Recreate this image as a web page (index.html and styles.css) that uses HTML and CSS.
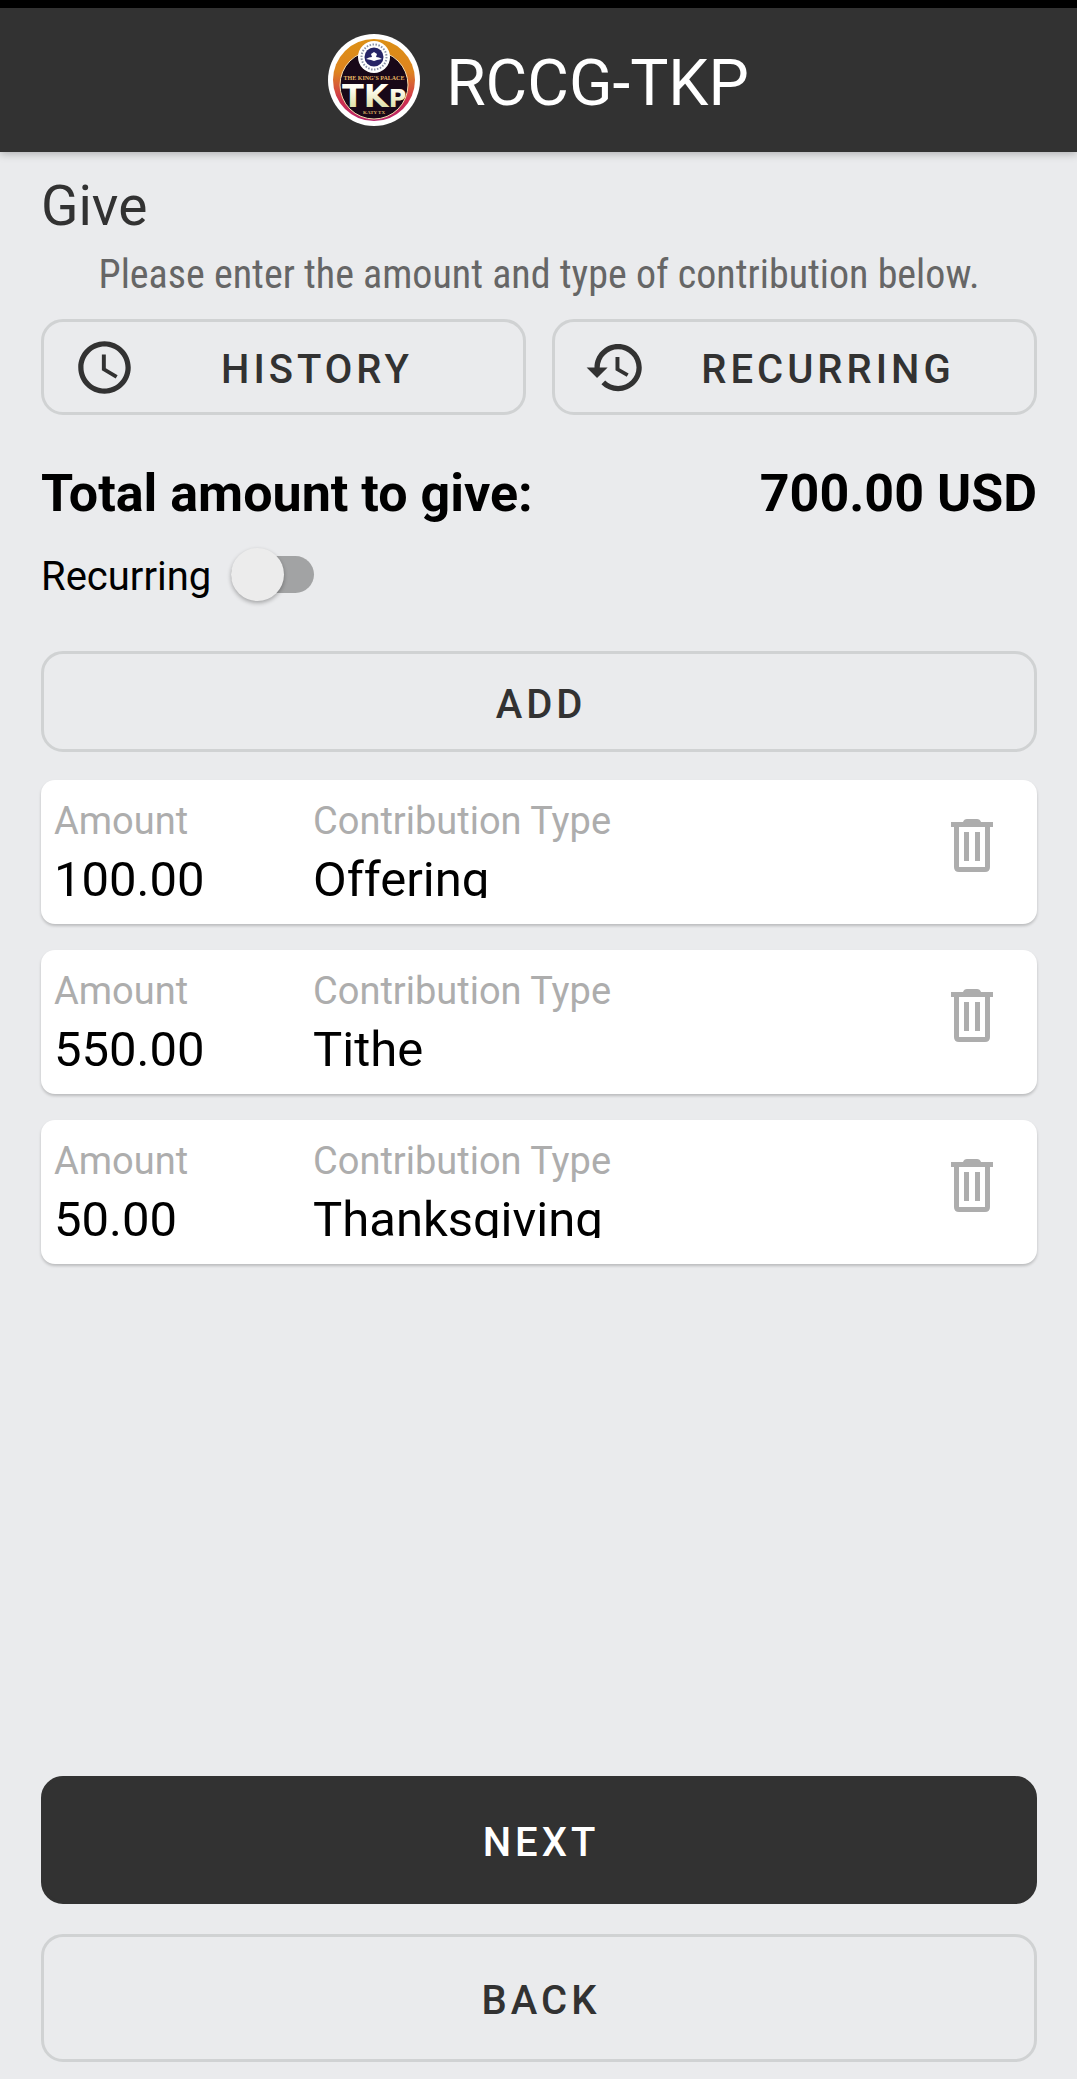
FILE: index.html
```html
<!DOCTYPE html>
<html lang="en">
<head>
<meta charset="utf-8">
<meta name="viewport" content="width=device-width, initial-scale=1">
<title>RCCG-TKP – Give</title>
<link rel="stylesheet" href="styles.css">
</head>
<body>
<header class="app-bar">
  <svg class="app-bar__logo" viewBox="0 0 92 92" role="img" aria-label="The King's Palace">
    <defs>
      <linearGradient id="ring" x1="0" y1="0" x2="0" y2="1">
        <stop offset="0" stop-color="#dc9014"/>
        <stop offset=".4" stop-color="#de8420"/>
        <stop offset=".75" stop-color="#cf3050"/>
        <stop offset="1" stop-color="#b5246a"/>
      </linearGradient>
      <linearGradient id="gold" x1="0" y1="0" x2="0" y2="1">
        <stop offset=".3" stop-color="#fffef4"/>
        <stop offset="1" stop-color="#d3d38a"/>
      </linearGradient>
    </defs>
    <circle cx="46" cy="46" r="46" fill="#fff"/>
    <circle cx="46" cy="46" r="41" fill="url(#ring)"/>
    <circle cx="46" cy="51" r="34" fill="#180818" stroke="#f3dcae" stroke-width="1"/>
    <circle cx="46" cy="23" r="16" fill="#fff"/>
    <circle cx="46" cy="23" r="12.500" fill="none" stroke="#8a93a8" stroke-width="2" stroke-dasharray="1.500 1.500"/>
    <circle cx="46" cy="23" r="9.500" fill="#262466"/>
    <path d="M38 25q3-2 6-2l-1-3 3-2 3 2-1 3q3 0 6 2l-5 1-3 1-3-1z" fill="#fff"/>
    <text x="46" y="46" text-anchor="middle" class="logo-arc">THE KING'S PALACE</text>
    <text x="14" y="73" fill="url(#gold)" class="logo-big">TK<tspan class="logo-small">P</tspan></text>
    <text x="46" y="80" text-anchor="middle" class="logo-city">KATY TX</text>
  </svg>
  <span class="app-bar__title">RCCG-TKP</span>
</header>

<main class="page">
  <h1 class="page__title">Give</h1>
  <p class="page__hint">Please enter the amount and type of contribution below.</p>

  <nav class="shortcuts" aria-label="Giving records">
    <button class="btn btn--icon" type="button">
      <svg class="btn__icon" viewBox="0 0 24 24" aria-hidden="true"><path d="M11.990 2C6.470 2 2 6.480 2 12s4.470 10 9.990 10C17.520 22 22 17.520 22 12S17.520 2 11.990 2zM12 20c-4.420 0-8-3.580-8-8s3.580-8 8-8 8 3.580 8 8-3.580 8-8 8zm.5-13H11v6l5.250 3.150.75-1.230-4.500-2.670z"/></svg>
      <span class="btn__label">HISTORY</span>
    </button>
    <button class="btn btn--icon" type="button">
      <svg class="btn__icon" viewBox="0 0 24 24" aria-hidden="true"><path d="M13 3c-4.970 0-9 4.030-9 9H1l3.890 3.890.07.14L9 12H6c0-3.870 3.130-7 7-7s7 3.130 7 7-3.130 7-7 7c-1.930 0-3.680-.79-4.940-2.060l-1.420 1.420C8.270 19.990 10.510 21 13 21c4.970 0 9-4.030 9-9s-4.030-9-9-9zm-1 5v5l4.280 2.540.72-1.210-3.500-2.080V8H12z"/></svg>
      <span class="btn__label">RECURRING</span>
    </button>
  </nav>

  <div class="total">
    <span>Total amount to give:</span>
    <output>700.00 USD</output>
  </div>

  <label class="toggle">
    <span class="toggle__label">Recurring</span>
    <input class="toggle__input" type="checkbox" role="switch">
  </label>

  <button class="btn btn--add" type="button">ADD</button>

  <ul class="gifts">
    <li class="gift">
      <label class="field field--amount"><span class="field__label">Amount</span><span class="field__box"><input class="field__input" type="text" inputmode="decimal" value="100.00"></span></label>
      <label class="field field--type"><span class="field__label">Contribution Type</span><span class="field__box"><select class="field__input"><option selected>Offering</option><option>Tithe</option><option>Thanksgiving</option></select></span></label>
      <button class="gift__delete" type="button" aria-label="Delete offering"><svg viewBox="0 0 42 53" aria-hidden="true"><path fill-rule="evenodd" d="M16 0h10q3 0 4 3h12v5h-3v40q0 5-5 5H8q-5 0-5-5V8H0V3h12q1-3 4-3zM8 8v40h26V8zM13 13h5v29h-5zM24 13h5v29h-5z"/></svg></button>
    </li>
    <li class="gift">
      <label class="field field--amount"><span class="field__label">Amount</span><span class="field__box"><input class="field__input" type="text" inputmode="decimal" value="550.00"></span></label>
      <label class="field field--type"><span class="field__label">Contribution Type</span><span class="field__box"><select class="field__input"><option>Offering</option><option selected>Tithe</option><option>Thanksgiving</option></select></span></label>
      <button class="gift__delete" type="button" aria-label="Delete tithe"><svg viewBox="0 0 42 53" aria-hidden="true"><path fill-rule="evenodd" d="M16 0h10q3 0 4 3h12v5h-3v40q0 5-5 5H8q-5 0-5-5V8H0V3h12q1-3 4-3zM8 8v40h26V8zM13 13h5v29h-5zM24 13h5v29h-5z"/></svg></button>
    </li>
    <li class="gift">
      <label class="field field--amount"><span class="field__label">Amount</span><span class="field__box"><input class="field__input" type="text" inputmode="decimal" value="50.00"></span></label>
      <label class="field field--type"><span class="field__label">Contribution Type</span><span class="field__box"><select class="field__input"><option>Offering</option><option>Tithe</option><option selected>Thanksgiving</option></select></span></label>
      <button class="gift__delete" type="button" aria-label="Delete thanksgiving"><svg viewBox="0 0 42 53" aria-hidden="true"><path fill-rule="evenodd" d="M16 0h10q3 0 4 3h12v5h-3v40q0 5-5 5H8q-5 0-5-5V8H0V3h12q1-3 4-3zM8 8v40h26V8zM13 13h5v29h-5zM24 13h5v29h-5z"/></svg></button>
    </li>
  </ul>

  <div class="actions">
    <button class="btn btn--large btn--primary" type="button">NEXT</button>
    <button class="btn btn--large" type="button">BACK</button>
  </div>
</main>
</body>
</html>
```

FILE: styles.css
```css
:root {
  --bg: #eaebed;
  --ink: #323232;
  --line: #d0d2d3;
  --muted: #adadad;
}

* { box-sizing: border-box; }

body {
  margin: 0;
  min-height: 100vh;
  display: flex;
  flex-direction: column;
  background: var(--bg);
  color: #000;
  font-family: Roboto, "Liberation Sans", sans-serif;
  font-size: 40px;
  line-height: 48px;
}

button, input, select { font: inherit; color: inherit; }

/* App bar */
.app-bar {
  display: flex;
  align-items: center;
  justify-content: center;
  gap: 26px;
  padding: 26px 16px;
  border-top: 8px solid #000;
  background: var(--ink);
  color: #fff;
  box-shadow: 0 2px 8px rgba(0, 0, 0, .25);
}
.app-bar__logo { width: 92px; height: 92px; }
.app-bar__title { padding-top: 8px; font-size: 64px; line-height: 76px; }
.logo-arc { font: bold 6px "Liberation Serif", serif; fill: #e9b663; }
.logo-big { font: bold 32px "DejaVu Sans", sans-serif; }
.logo-small { font-size: 24px; }
.logo-city { font: bold 5px "Liberation Serif", serif; fill: #d9ac62; }

/* Page */
.page {
  flex: 1;
  display: flex;
  flex-direction: column;
  padding: 22px 40px 17px 41px;
}
.page__title {
  margin: 0;
  color: var(--ink);
  font-size: 55px;
  font-weight: 400;
  line-height: 64px;
}
.page__hint {
  margin: 13px 0 20px;
  color: #666;
  font-family: "Roboto Condensed", Roboto, sans-serif;
  text-align: center;
}

/* Buttons */
.btn {
  padding: 6px 32px 0;
  border: 3px solid var(--line);
  border-radius: 22px;
  background: transparent;
  color: var(--ink);
  font-weight: 500;
  letter-spacing: 4px;
  text-indent: 4px;
}
.btn--icon {
  flex: 1 1 0;
  display: flex;
  align-items: center;
  height: 96px;
  padding: 0 29px;
}
.btn__icon { width: 63px; height: 63px; fill: currentColor; }
.btn__label { flex: 1; padding-top: 6px; text-align: center; }
.btn--add { height: 101px; }
.btn--large { height: 128px; }
.btn--primary { border-color: var(--ink); background: var(--ink); color: #fff; }
.shortcuts { display: flex; gap: 26px; }

.total {
  display: flex;
  justify-content: space-between;
  margin-top: 49px;
  font-size: 52px;
  font-weight: 700;
  line-height: 60px;
}

/* Recurring switch */
.toggle {
  align-self: flex-start;
  display: flex;
  align-items: center;
  gap: 20px;
  margin: 24px 0 50px;
}
.toggle__label { padding-top: 4px; }
.toggle__input {
  appearance: none;
  position: relative;
  width: 83px;
  height: 37px;
  margin: 8px 0;
  border-radius: 19px;
  background: #a2a3a4;
}
.toggle__input::before {
  content: "";
  position: absolute;
  top: -8px;
  left: 0;
  width: 53px;
  height: 53px;
  border-radius: 50%;
  background: #ececec;
  box-shadow: 0 2px 4px rgba(0, 0, 0, .3);
}
.toggle__input:checked::before { left: auto; right: 0; }

/* Contribution cards */
.gifts {
  display: flex;
  flex-direction: column;
  gap: 26px;
  margin: 28px 0;
  padding: 0;
  list-style: none;
}
.gift {
  display: flex;
  padding: 19px 44px 26px 13px;
  border-radius: 14px;
  background: #fff;
  box-shadow: 0 2px 3px rgba(0, 0, 0, .2);
}
.field { display: flex; flex-direction: column; gap: 9px; min-width: 0; }
.field--amount { flex: 0 1 259px; }
.field--type { flex: 1; }
.field__label { color: var(--muted); font-size: 38px; line-height: 44px; }
.field__box { height: 46px; overflow: hidden; }
.field__input {
  appearance: none;
  display: block;
  width: 100%;
  height: 56px;
  padding: 0;
  border: 0;
  background: transparent;
  font-size: 49px;
  line-height: 56px;
}
.gift__delete {
  align-self: flex-start;
  margin: 20px 0 0;
  padding: 0;
  border: 0;
  background: none;
}
.gift__delete svg { display: block; width: 42px; height: 53px; fill: var(--muted); }

.actions {
  display: flex;
  flex-direction: column;
  gap: 30px;
  margin-top: auto;
}
```
